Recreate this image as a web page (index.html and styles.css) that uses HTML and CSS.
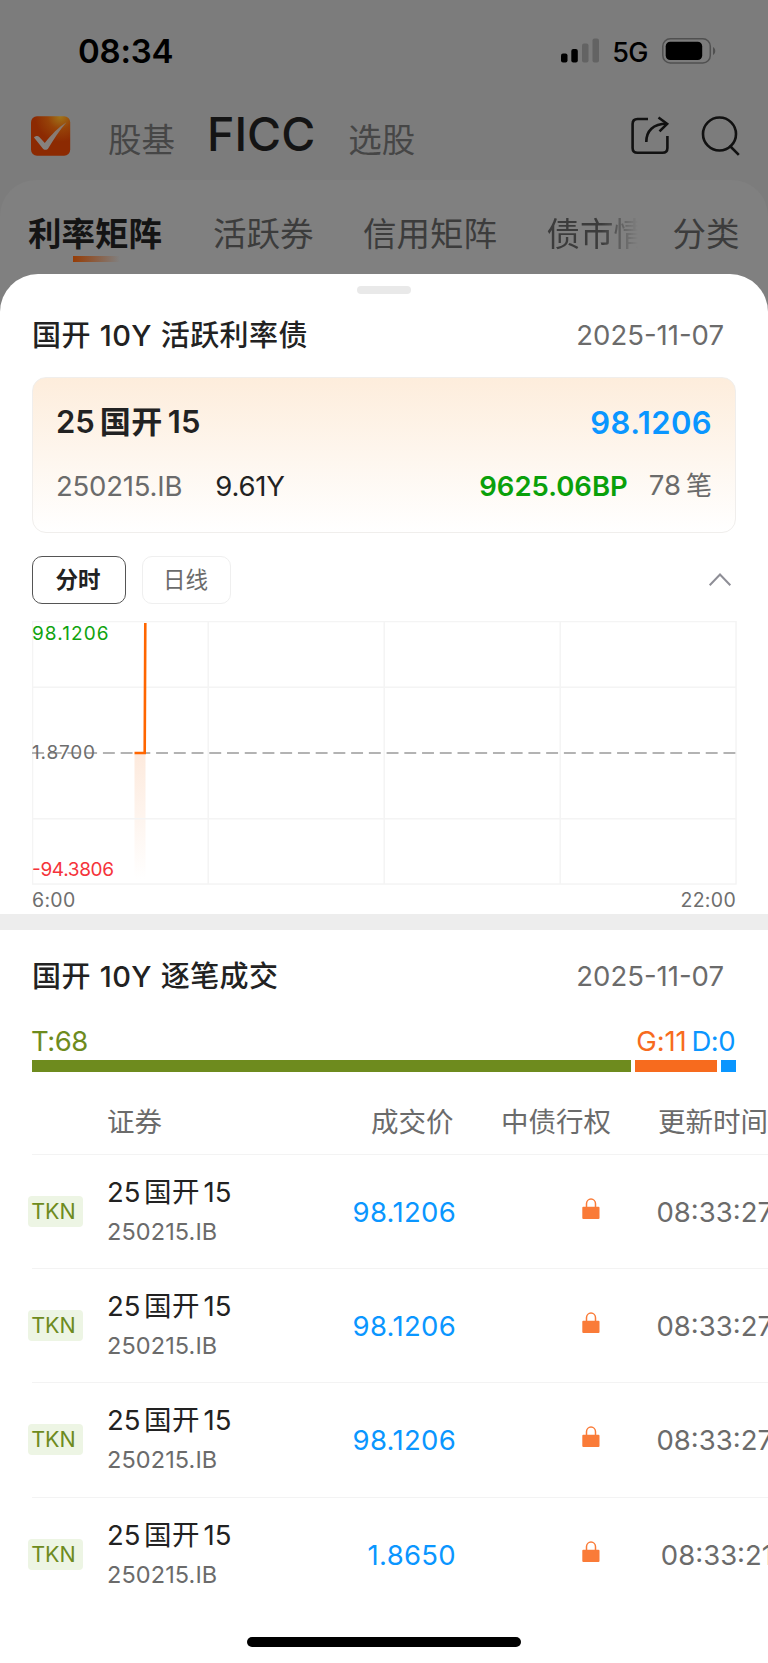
FILE: index.html
```html
<!DOCTYPE html>
<html lang="zh-CN">
<head>
    <meta charset="UTF-8">
    <meta name="viewport" content="width=device-width, initial-scale=1.0">
    <title>FICC</title>
    <link rel="stylesheet" href="styles.css">
</head>
<body>
    <div class="status-bar">
        <span class="clock">08:34</span>
        <svg class="signal" width="39" height="26" viewBox="0 0 39 26">
            <rect x="0" y="15.5" width="6.5" height="9" rx="2"/>
            <rect x="10.3" y="11" width="6.5" height="13.5" rx="2"/>
            <rect x="21" y="5.5" width="6.5" height="19" rx="2" fill="#636363"/>
            <rect x="31.5" y="0.5" width="6.5" height="24" rx="2" fill="#636363"/>
        </svg>
        <span class="network">5G</span>
        <svg class="battery" width="55" height="26" viewBox="0 0 55 26">
            <rect x="0.8" y="0.8" width="47.5" height="24.2" rx="7.5" fill="none" stroke="#505050" stroke-width="1.5"/>
            <rect x="3.7" y="3.8" width="36.5" height="18.2" rx="4.5"/>
            <path d="M51 9v8c3-1.5 3-6.500 0-8z" fill="#505050"/>
        </svg>
    </div>

    <div class="header">
        <svg class="logo" width="40" height="40" viewBox="0 0 40 40">
            <defs>
                <radialGradient id="logoBg" cx="0.75" cy="0" r="0.65">
                    <stop offset="0" stop-color="#a0761a"/>
                    <stop offset="0.5" stop-color="#964208"/>
                    <stop offset="1" stop-color="#8c2a02"/>
                </radialGradient>
                <linearGradient id="logoTick" x1="0" y1="1" x2="1" y2="0">
                    <stop offset="0" stop-color="#858585"/>
                    <stop offset="1" stop-color="#8a7568"/>
                </linearGradient>
            </defs>
            <rect x="0" y="0.3" width="39.200" height="39.400" rx="6" fill="url(#logoBg)"/>
            <path d="M3 21.500c1.300-1.800 4-2 5.300-.5l5.500 6C20 19 28 11 35.500 6.300c-7 8-13 17.500-18.200 26-1.200 2-4.300 2-5.500.3z" fill="url(#logoTick)"/>
        </svg>
        <span class="nav">股基</span>
        <span class="nav current">FICC</span>
        <span class="nav">选股</span>
        <svg class="share" width="40" height="42" viewBox="0 0 40 42" fill="none" stroke="#111" stroke-width="2.600">
            <path d="M18 4H7.500C4.500 4 2.600 6 2.600 9v24c0 3 1.900 4.800 4.900 4.800h25c3 0 4.900-1.800 4.900-4.800V21"/>
            <path d="M16.300 27c0-11 6.700-18.200 20.500-18.200"/>
            <path d="M28.500 2.500l8.600 6.300-7.600 7.600"/>
        </svg>
        <svg class="search" width="40" height="42" viewBox="0 0 40 42" fill="none" stroke="#111" stroke-width="2.600">
            <circle cx="18.500" cy="19" r="16.500"/>
            <path d="M28.500 30.500l9.300 9.300"/>
        </svg>
    </div>

    <div class="panel">
        <div class="tabs">
            <span class="tab on">利率矩阵</span>
            <span class="tab">活跃券</span>
            <span class="tab">信用矩阵</span>
            <span class="tab cut">债市情</span>
            <span class="tab">分类</span>
        </div>

        <div class="sheet">
            <div class="handle"></div>
            <div class="title-row">
                <h2>国开 10Y 活跃利率债</h2>
                <span class="date">2025-11-07</span>
            </div>

            <div class="card">
                <div class="card-row">
                    <span class="bond">25<i>国开</i>15</span>
                    <span class="last">98.1206</span>
                </div>
                <div class="card-row">
                    <span class="code">250215.IB</span>
                    <span class="term">9.61Y</span>
                    <span class="bp">9625.06BP</span>
                    <span class="count">78<i>笔</i></span>
                </div>
            </div>

            <div class="tools">
                <button class="active">分时</button>
                <button>日线</button>
                <svg width="24" height="16" viewBox="0 0 24 16" fill="none" stroke="#8e8e96" stroke-width="2">
                    <path d="M1.700 13.200L12 2.500l10.300 10.700"/>
                </svg>
            </div>

            <svg class="chart" width="705" height="265" viewBox="0 0 705 265">
                <defs>
                    <linearGradient id="area" x1="0" y1="0" x2="0" y2="1">
                        <stop offset="0" stop-color="#fdeadd"/>
                        <stop offset="1" stop-color="#fff"/>
                    </linearGradient>
                </defs>
                <rect x="102.500" y="133" width="11" height="125" fill="url(#area)"/>
                <g fill="none" stroke="#f4f4f4" stroke-width="1.500">
                    <rect x="0.500" y="0.500" width="703.500" height="262.500"/>
                    <path d="M0 66.200h704M0 197.800h704M176.200 0v263M352.200 0v263M528.200 0v263"/>
                </g>
                <path d="M0 132h704" stroke="#b3b3b3" stroke-width="2" stroke-dasharray="11.900 5.830"/>
                <path d="M102.500 132h10.200L113.300 2" fill="none" stroke="#ff6600" stroke-width="2.600"/>
                <text x="0" y="19" fill="#0fa30f" textLength="76.500">98.1206</text>
                <text x="0" y="138" fill="#6e6e6e" textLength="63">1.8700</text>
                <text x="0" y="255.300" fill="#f5333a" textLength="82">-94.3806</text>
            </svg>
            <div class="axis">
                <span>6:00</span>
                <span>22:00</span>
            </div>

            <div class="divider"></div>

            <div class="title-row">
                <h2>国开 10Y 逐笔成交</h2>
                <span class="date">2025-11-07</span>
            </div>

            <div class="ratio">
                <span class="t">T:68</span>
                <span class="g">G:11</span>
                <span class="d">D:0</span>
            </div>
            <div class="ratio-bar">
                <div class="bar-t"></div>
                <div class="bar-g"></div>
                <div class="bar-d"></div>
            </div>

            <div class="trades">
                <div class="row head">
                    <span></span>
                    <span>证券</span>
                    <span class="num">成交价</span>
                    <span class="num">中债行权</span>
                    <span class="num">更新时间</span>
                </div>
                <div class="row">
                    <span class="tag">TKN</span>
                    <div class="name"><b>25<i>国开</i>15</b><small>250215.IB</small></div>
                    <span class="price">98.1206</span>
                    <svg class="lock" width="18" height="22" viewBox="0 0 18 22"><path d="M4.500 10V5.800a4.500 4.800 0 0 1 9 0V10" fill="none" stroke="#fa7b38" stroke-width="1.500"/><rect x="0.300" y="8.800" width="17.200" height="12.300" rx="1" fill="#fa7b38"/></svg>
                    <span class="time">08:33:27</span>
                </div>
                <div class="row">
                    <span class="tag">TKN</span>
                    <div class="name"><b>25<i>国开</i>15</b><small>250215.IB</small></div>
                    <span class="price">98.1206</span>
                    <svg class="lock" width="18" height="22" viewBox="0 0 18 22"><path d="M4.500 10V5.800a4.500 4.800 0 0 1 9 0V10" fill="none" stroke="#fa7b38" stroke-width="1.500"/><rect x="0.300" y="8.800" width="17.200" height="12.300" rx="1" fill="#fa7b38"/></svg>
                    <span class="time">08:33:27</span>
                </div>
                <div class="row">
                    <span class="tag">TKN</span>
                    <div class="name"><b>25<i>国开</i>15</b><small>250215.IB</small></div>
                    <span class="price">98.1206</span>
                    <svg class="lock" width="18" height="22" viewBox="0 0 18 22"><path d="M4.500 10V5.800a4.500 4.800 0 0 1 9 0V10" fill="none" stroke="#fa7b38" stroke-width="1.500"/><rect x="0.300" y="8.800" width="17.200" height="12.300" rx="1" fill="#fa7b38"/></svg>
                    <span class="time">08:33:27</span>
                </div>
                <div class="row">
                    <span class="tag">TKN</span>
                    <div class="name"><b>25<i>国开</i>15</b><small>250215.IB</small></div>
                    <span class="price">1.8650</span>
                    <svg class="lock" width="18" height="22" viewBox="0 0 18 22"><path d="M4.500 10V5.800a4.500 4.800 0 0 1 9 0V10" fill="none" stroke="#fa7b38" stroke-width="1.500"/><rect x="0.300" y="8.800" width="17.200" height="12.300" rx="1" fill="#fa7b38"/></svg>
                    <span class="time">08:33:21</span>
                </div>
            </div>

            <div class="home-bar"></div>
        </div>
    </div>
</body>
</html>
```
FILE: styles.css
```css
* {
    box-sizing: border-box;
}
body {
    margin: 0;
    width: 768px;
    height: 1663px;
    overflow: hidden;
    background: #7c7c7c;
    font-family: Inter, "Noto Sans CJK SC", sans-serif;
    color: #222;
    white-space: nowrap;
}
i {
    display: inline-block;
    margin: 0 3px 0 4px;
    font-style: normal;
}
.status-bar {
    display: flex;
    align-items: center;
    height: 102px;
    padding: 0 51px 0 78px;
    color: #000;
}
.clock {
    flex: 1;
    font-size: 33px;
    font-weight: 600;
    letter-spacing: -0.2px;
}
.network {
    margin: 2px 14px 0 12px;
    font-size: 27px;
    font-weight: 500;
    letter-spacing: -0.5px;
}
.header {
    display: flex;
    align-items: center;
    height: 78px;
    padding: 0 27px 11px 31px;
}
.nav {
    margin-left: 37px;
    padding-top: 8px;
    font-size: 33.500px;
    line-height: 40px;
    color: #464646;
}
.nav.current {
    margin-left: 32px;
    padding: 0 0 4px;
    font-size: 46.500px;
    font-weight: 500;
    color: #141414;
}
.nav.current + .nav {
    margin-left: 33px;
}
.share {
    margin-left: auto;
}
.search {
    margin-left: 31px;
}
.panel {
    border-radius: 36px 36px 0 0;
    background: #808080;
}
.tabs {
    display: flex;
    height: 94.400px;
    padding: 34px 28px 0 28px;
    font-size: 33.500px;
    line-height: 40px;
    color: #3c3c3c;
}
.tab {
    margin-right: 49.500px;
}
.tab.on {
    margin-right: 51px;
    font-weight: 700;
    color: #141414;
}
.tab.on::after {
    content: "";
    display: block;
    width: 47px;
    height: 6px;
    margin: 2px 0 0 45px;
    background: linear-gradient(to right, #963c05, #808080);
}
.tab.cut {
    width: 91px;
    height: 40px;
    overflow: hidden;
    margin-right: 35px;
    -webkit-mask-image: linear-gradient(to right, #000 60%, transparent);
    mask-image: linear-gradient(to right, #000 60%, transparent);
}
.tab:last-child {
    margin-right: 0;
}
.sheet {
    height: 1389px;
    padding-top: 11.600px;
    border-radius: 38px 38px 0 0;
    background: #fff;
}
.handle {
    width: 54px;
    height: 8px;
    margin: 0 auto 11px;
    border-radius: 4px;
    background: #e9e9e9;
}
.title-row {
    display: flex;
    justify-content: space-between;
    align-items: center;
    height: 60px;
    padding: 0 44px 0 32px;
}
h2 {
    margin: -3px 0 0;
    font-size: 29px;
    font-weight: 500;
    letter-spacing: 0.400px;
    word-spacing: 0.800px;
}
.date {
    font-size: 27.500px;
    color: #6b6b6b;
}
.card {
    height: 156px;
    margin: 12px 32px 23px;
    padding: 20px 23px;
    border: 1px solid #f0eeec;
    border-radius: 14px;
    background: linear-gradient(#fdeddc, #fff);
}
.card-row {
    display: flex;
    align-items: center;
    height: 50px;
    font-size: 27.500px;
    line-height: 50px;
    color: #6b6b6b;
}
.card-row + .card-row {
    margin-top: 13px;
}
.bond {
    flex: 1;
    font-size: 31px;
    font-weight: 600;
    color: #222;
}
.bond i {
    margin: -1px 5px 1px;
    letter-spacing: 0.500px;
}
.last {
    font-size: 31px;
    font-weight: 600;
    letter-spacing: 0.400px;
    color: #0a96ff;
}
.code {
    letter-spacing: -0.200px;
}
.term {
    flex: 1;
    margin-left: 33px;
    letter-spacing: -0.200px;
    color: #222;
}
.bp {
    margin-right: 21px;
    font-weight: 600;
    color: #0aa00a;
}
.count i {
    margin: -1px 0 1px 5px;
    font-size: 26px;
}
.tools {
    display: flex;
    align-items: center;
    height: 48px;
    margin: 0 36px 17px 32px;
}
button {
    width: 89px;
    height: 48px;
    border: 1px solid #efefef;
    border-radius: 10px;
    padding: 0 2px 4px 0;
    background: #fff;
    font-family: inherit;
    font-size: 22.500px;
    color: #6b6b6b;
}
button.active {
    width: 94px;
    margin-right: 16px;
    border-color: #555;
    font-weight: 700;
    color: #222;
}
.tools svg {
    margin-left: auto;
}
.chart {
    display: block;
    margin-left: 32px;
    font-size: 19px;
}
.axis {
    display: flex;
    justify-content: space-between;
    margin: 0 32px;
    height: 28px;
    font-size: 19.500px;
    line-height: 29px;
    letter-spacing: 0.300px;
    color: #6e6e6e;
}
.divider {
    height: 16px;
    margin-bottom: 16px;
    background: #ededed;
}
.ratio {
    display: flex;
    margin: 20px 33px 4px 31px;
    font-size: 27.500px;
    line-height: 30px;
    letter-spacing: -0.5px;
}
.t {
    flex: 1;
    color: #6e8b1e;
}
.g {
    margin-right: 5px;
    letter-spacing: -0.2px;
    color: #f76b1e;
}
.d {
    color: #0a96ff;
}
.ratio-bar {
    display: flex;
    gap: 4px;
    height: 12px;
    margin: 0 32px;
}
.bar-t {
    flex: 1;
    background: #6e8b1e;
}
.bar-g {
    width: 82px;
    background: #f76b1e;
}
.bar-d {
    width: 15px;
    background: #0a96ff;
}
.trades {
    margin: 17px 0 0 32px;
}
.row {
    display: grid;
    grid-template-columns: 75px 200px 149px 155px 162px;
    align-items: center;
    height: 114.200px;
    border-bottom: 1.500px solid #f3f3f3;
    font-size: 27.500px;
    color: #6b6b6b;
}
.row:last-child {
    border: none;
}
.head {
    height: 66px;
    padding: 0 0 3px;
    font-size: 27.500px;
}
.head .num {
    padding-right: 2.500px;
    text-align: right;
}
.head .num:nth-child(4) {
    padding-right: 0;
}
.head .num:last-child {
    padding-right: 5px;
}
.tag {
    width: 55px;
    height: 31px;
    margin-left: -4px;
    padding-right: 4px;
    border-radius: 4px;
    background: #edf5e4;
    font-size: 21.500px;
    line-height: 31px;
    text-align: center;
    color: #6e8b1e;
}
.name b, .name small {
    display: block;
    font-size: 27.500px;
    font-weight: 400;
    line-height: 40px;
    color: #222;
}
.name small {
    font-size: 23.500px;
    line-height: 38px;
    letter-spacing: 0.100px;
    color: #6b6b6b;
}
.name i {
    margin: -1px 3.500px 1px;
    letter-spacing: 0.500px;
}
.price {
    text-align: right;
    letter-spacing: 0.300px;
    color: #0a96ff;
}
.lock {
    justify-self: end;
    margin: 0 11px 5px 0;
}
.time {
    text-align: right;
}
.home-bar {
    width: 274px;
    height: 10px;
    margin: 25px auto 0;
    border-radius: 5px;
    background: #000;
}
```
